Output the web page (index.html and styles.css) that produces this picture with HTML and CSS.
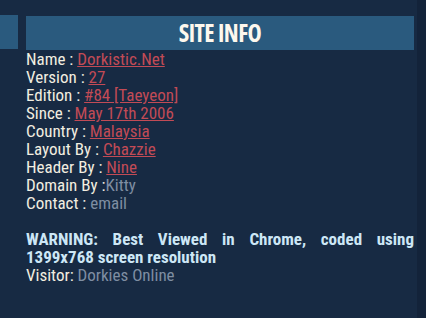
FILE: index.html
```html
<!DOCTYPE html>
<html lang="en">
<head>
    <meta charset="UTF-8">
    <title>Dorkistic.Net</title>
    <link rel="stylesheet" href="styles.css">
</head>
<body>
    <div class="page">
        <div class="sidebar">
            <div class="side-title"></div>
        </div>

        <div class="content">
            <h2 class="box-title">SITE INFO</h2>
            <div class="info">
                Name : <a href="#">Dorkistic.Net</a><br>
                Version : <a href="#">27</a><br>
                Edition : <a href="#">#84 [Taeyeon]</a><br>
                Since : <a href="#">May 17th 2006</a><br>
                Country : <a href="#">Malaysia</a><br>
                Layout By : <a href="#">Chazzie</a><br>
                Header By : <a href="#">Nine</a><br>
                Domain By :<span class="muted">Kitty</span><br>
                Contact : <span class="muted">email</span><br>
                <br>
                <p class="warning">WARNING: Best Viewed in Chrome, coded using 1399x768 screen resolution</p>
                Visitor: <span class="muted">Dorkies Online</span>
            </div>
        </div>
    </div>
</body>
</html>
```
FILE: styles.css
```css
* {
    margin: 0;
    padding: 0;
    box-sizing: border-box;
}

body {
    background-color: #13233a;
    font-family: "Roboto Condensed", "DejaVu Sans Condensed", sans-serif;
    font-size: 17px;
    font-weight: 400;
    line-height: 18px;
    color: #f2eee0;
}

.page {
    width: 417px;
    min-height: 318px;
    background-color: #172a43;
    display: flex;
    gap: 8px;
    padding-top: 15px;
}

.sidebar {
    width: 18px;
}

.side-title {
    height: 34px;
    background-color: #2a5a7e;
}

.content {
    width: 388px;
    padding-top: 1px;
}

.box-title {
    height: 34px;
    background-color: #2a5a7e;
    color: #fdf8ee;
    text-align: center;
    font-family: "Open Sans", sans-serif;
    font-size: 24px;
    font-weight: 700;
    font-stretch: 75%;
    line-height: 34px;
    letter-spacing: -0.5px;
}

.info a {
    color: #c24b56;
    text-decoration: underline;
}

.muted {
    color: #7f8ea2;
}

.warning {
    color: #cde7f6;
    font-weight: 700;
    text-align: justify;
}
```
